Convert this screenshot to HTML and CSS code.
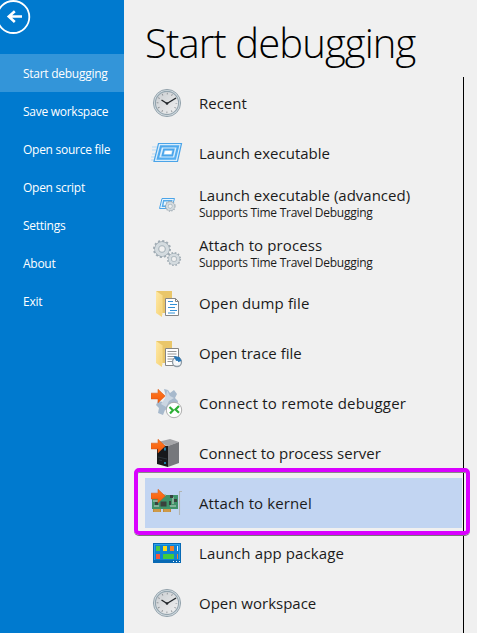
FILE: index.html
```
<!DOCTYPE html>
<html lang="en">
<head>
<meta charset="utf-8">
<title>Start debugging</title>
<link rel="stylesheet" href="styles.css">
</head>
<body>
<svg class="defs" width="0" height="0">
  <defs>
    <linearGradient id="face" x1="0" y1="0" x2="1" y2="1"><stop offset="0" stop-color="#c9cdd1"/><stop offset="1" stop-color="#f1f1f1"/></linearGradient>
    <linearGradient id="folder" x1="0" y1="0" x2="1" y2="1"><stop offset="0" stop-color="#ffe9a6"/><stop offset="1" stop-color="#f5d173"/></linearGradient>
    <linearGradient id="frame" x1="0" y1="0" x2="1" y2="1"><stop offset="0" stop-color="#4da6ea"/><stop offset="1" stop-color="#55b0f3"/></linearGradient>
    <linearGradient id="hot" x1="0" y1="0" x2="0" y2="1"><stop offset="0" stop-color="#ff7b20"/><stop offset="1" stop-color="#f4580c"/></linearGradient>
    <symbol id="arrow" viewBox="0 0 32 32"><path d="M0 6.2h7V2.3l7.2 6.8L7 15.8v-3.9H0z" fill="url(#hot)" stroke="#d95a1b" stroke-width=".6"/></symbol>
    <symbol id="clock" viewBox="0 0 32 32">
      <circle cx="16" cy="16" r="13.6" fill="#d3dce1" stroke="#8d9da7" stroke-width=".9"/>
      <circle cx="16" cy="16" r="11.6" fill="url(#face)" stroke="#93a4ae" stroke-width="1.1"/>
      <circle cx="16" cy="16" r="9.4" fill="none" stroke="#8a8e92" stroke-width="1.8" stroke-dasharray=".9 4.02" stroke-dashoffset=".45"/>
      <path d="M10.5 13l5.5 3.5 9-5.5" fill="none" stroke="#22272b" stroke-width="1.4"/>
      <circle cx="16" cy="16.5" r="1.3" fill="#22272b"/>
    </symbol>
    <symbol id="window" viewBox="0 0 32 32">
      <path d="M1 10h5M1 13h4M1 17h3M0 20h4M0 23h3" stroke="#b5d9f5" stroke-width="1"/>
      <path d="M7.5 6.5h23L26.5 24.5H3z" fill="#d8edfc" stroke="#4ba4e8" stroke-width="1.2"/>
      <path d="M10 9.3h17L24 21.7H6.800z" fill="#d8edfc" stroke="url(#frame)" stroke-width="2.2"/>
      <path d="M13 12.500h9.700l-1.400 6H11.400z" fill="#d5ecfc" stroke="#4ba5ea" stroke-width="1.800"/>
      <path d="M14.500 14h6l-.7 3h-6z" fill="#fff"/>
    </symbol>
    <symbol id="gear" viewBox="-10 -10 20 20">
      <circle r="8.3" fill="none" stroke="#a1acb4" stroke-width="2.4" stroke-dasharray="2.17 2.17"/>
      <circle r="5.6" fill="none" stroke="#98a5ae" stroke-width="5"/>
      <circle r="5.6" fill="none" stroke="#d4dbdf" stroke-width="3.8"/>
      <circle r="3.4" fill="#f0f0f0" stroke="#9ba9b1" stroke-width=".7"/>
    </symbol>
    <symbol id="open-folder" viewBox="0 0 32 32">
      <path d="M5 4h16v22H10z" fill="#e9c66a"/><path d="M5 4l6 4v22l-6-4z" fill="url(#folder)"/><path d="M11 8v20" stroke="#f7dc8f"/>
    </symbol>
  </defs>
</svg>
<div class="app">
  <aside class="sidebar">
    <button class="back" aria-label="Back">
      <svg width="31" height="36" viewBox="0 0 31 36"><circle cx="13.3" cy="17" r="16" fill="none" stroke="#fff" stroke-width="1.8"/><path d="M22 16.500H8.500M14.800 11.300L8.800 16.500l6 5.500" fill="none" stroke="#fff" stroke-width="2.600"/></svg>
    </button>
    <nav class="menu">
      <a class="menu-item active">Start debugging</a>
      <a class="menu-item">Save workspace</a>
      <a class="menu-item">Open source file</a>
      <a class="menu-item">Open script</a>
      <a class="menu-item">Settings</a>
      <a class="menu-item">About</a>
      <a class="menu-item">Exit</a>
    </nav>
  </aside>
  <main class="main">
    <h1 class="title">Start debugging</h1>
    <div class="list">
      <div class="row"><svg class="icon" viewBox="0 0 32 32"><use href="#clock"/></svg><div class="label">Recent</div></div>
      <div class="row"><svg class="icon" viewBox="0 0 32 32"><use href="#window"/></svg><div class="label">Launch executable</div></div>
      <div class="row"><svg class="icon" viewBox="0 0 32 32"><path d="M11 11.500h12.500L20.500 21.500H8.500z" fill="#e5f3fd" stroke="#4ba4e8"/><path d="M12.700 13.700h8l-1.200 5.600h-8z" fill="#e9f5fd" stroke="#56abea" stroke-width="1.400"/><use href="#gear" x="13.500" y="13.500" width="11.500" height="11.500"/></svg><div class="label">Launch executable (advanced)<small>Supports Time Travel Debugging</small></div></div>
      <div class="row"><svg class="icon" viewBox="0 0 32 32"><use href="#gear" x="1.500" y="2.500" width="19" height="19"/><use href="#gear" x="15.500" y="14.500" width="15" height="15"/></svg><div class="label airy">Attach to process<small>Supports Time Travel Debugging</small></div></div>
      <div class="row"><svg class="icon" viewBox="0 0 32 32"><use href="#open-folder"/><path d="M14.500 11.500h10l3 3V28.500h-13z" fill="#fff" stroke="#858585"/><path d="M24.500 11.500v3h3" fill="none" stroke="#858585"/><path d="M17 14.500h5M19 17.500h7M17 20.500h7M19 23.500h7M17 26h7" stroke="#3491d6" stroke-width="1.100"/></svg><div class="label airy">Open dump file</div></div>
      <div class="row"><svg class="icon" viewBox="0 0 32 32"><use href="#open-folder"/><path d="M14.500 11.500h13v17h-13z" fill="#fff" stroke="#858585"/><path d="M16.500 14.500h9M16.500 17h9M16.500 19.500h9M16.500 22h8M16.500 24.500h7" stroke="#969696"/><circle cx="26" cy="25" r="4.500" fill="#f4f6f8" stroke="#8e9aa4" stroke-width="1.300"/><path d="M26 25.500l-3.500-6.500 6 1 2 4z" fill="#2878b8"/><circle cx="26" cy="25" r="1.200" fill="#fff"/></svg><div class="label">Open trace file</div></div>
      <div class="row"><svg class="icon" viewBox="0 0 32 32"><path d="M13 2l4 1 2 3 4-3 3 4-2 4 3 3-1 6-7 5-2-3-3 1-2 5-5-2 1-5-3-3 2-4 5 1 3-5z" fill="#a7b9cc"/><path d="M16 3l3 6 4 2-5 3-3 6-5-3 5-7z" fill="#cbd6e2"/><use href="#arrow"/><circle cx="23" cy="23" r="7.700" fill="#fff" stroke="#9a9a9a" stroke-width=".8"/><path d="M18.500 20l3.500 3.200-3 3.300M28 19l-3.500 3.500 3.500 3.200" fill="none" stroke="#2daf35" stroke-width="2.200"/></svg><div class="label wide">Connect to remote debugger</div></div>
      <div class="row"><svg class="icon" viewBox="0 0 32 32"><path d="M7 5l12-3 9 3-11 4z" fill="#a5a6a9"/><path d="M6 8l11 1v21l-11-3z" fill="#17191c"/><path d="M17 9l11-4v21l-11 4z" fill="#76787c"/><path d="M7 20l9 2M8 23l3 .7" stroke="#343f48" stroke-width=".7"/><path d="M14 10.500v3M14 25v2" stroke="#28a9e1" stroke-width="1.400"/><use href="#arrow"/></svg><div class="label">Connect to process server</div></div>
      <div class="row selected"><svg class="icon" viewBox="0 0 32 32"><path d="M1 8h26v14H1z" fill="#3f9269"/><path d="M2 10l7 1M2 14h6M11 8h4M22 10v7M3 19h5M19 19h6" stroke="#99bca8" stroke-width="1.500"/><path d="M2 22h8v3H2zM12 22h8v3h-8z" fill="#c28a3b"/><path d="M4 22v3M6 22v3M8 22v3M14 22v3M16 22v3M18 22v3" stroke="#e9c06b" stroke-width=".6"/><path d="M9.500 14.500h6v5h-6zM19 8h3v3h-3zM23 12h3v3h-3zM4 15h3v3H4zM18 14h2v4h-2z" fill="#39413d"/><path d="M31 4.500h-2.500V28" fill="none" stroke="#b2b4b1" stroke-width="1.100"/><use href="#arrow"/></svg><div class="label airy">Attach to kernel</div></div>
      <div class="row"><svg class="icon" viewBox="0 0 32 32"><path d="M2 6h28v20H2z" fill="#0869b4"/><path d="M3 7h26v16H3z" fill="#28a0ec"/><path d="M4 8h24v15H4z" fill="#0f83d5"/><path d="M5 9h4v5H5z" fill="#4bc844"/><path d="M12 9h4v5h-4z" fill="#ffdc16"/><path d="M19 9h4v5h-4z" fill="#f28129"/><path d="M5 17h4v5H5z" fill="#f5563d"/><path d="M12 17h11v5H12z" fill="#42cb3d"/><path d="M26 9h1v5h-1z" fill="#e4f3ff"/><path d="M26 17h1v5h-1z" fill="#f28129"/><path d="M22 24.500h1M25 24.500h1M28 24.500h1" stroke="#fff"/></svg><div class="label airy">Launch app package</div></div>
      <div class="row"><svg class="icon" viewBox="0 0 32 32"><use href="#clock"/></svg><div class="label">Open workspace</div></div>
    </div>
  </main>
</div>
</body>
</html>
```
FILE: styles.css
```
*, *::after { box-sizing: border-box; }
body { margin: 0; background: #f0f0f0; font-family: "Open Sans", "Noto Sans", sans-serif; overflow: hidden; }
.defs { position: absolute; }
.app { display: flex; width: 477px; height: 633px; }
.sidebar { width: 124px; flex: none; background: #007acf; }
.back { display: block; height: 54px; padding: 0; border: 0; background: none; }
.back svg { display: block; height: 36px; margin-bottom: 18px; }
.menu-item { display: flex; align-items: center; height: 38px; padding-left: 23px; color: #fff; font-size: 12px; white-space: nowrap; letter-spacing: -0.27px; }
.menu-item.active { background: #3395d9; }
.main { flex: 1; padding-left: 21px; min-width: 0; }
.title { margin: 0; height: 77px; line-height: 86px; font-size: 40px; font-weight: 300; letter-spacing: -0.9px; color: #000; white-space: nowrap; }
.list { width: 319px; height: 556px; padding-top: 1px; border-right: 1px solid #000; }
.row { display: flex; align-items: center; width: 317px; height: 50px; padding-left: 6px; gap: 16px; color: #1b1b1b; }
.icon { width: 32px; height: 32px; flex: none; }
.label { font-size: 15px; line-height: 20px; white-space: nowrap; }
.label.airy { letter-spacing: 0.12px; }
.label.wide { letter-spacing: 0.2px; }
.label small { display: block; font-size: 12px; line-height: 16px; letter-spacing: -0.27px; }
.selected { position: relative; background: #c2d5f2; }
.selected::after { content: ""; position: absolute; left: -11px; top: -10px; width: 336px; height: 67px; border: 4px solid #d900ff; border-radius: 5px; box-shadow: inset 0 1px 0 #888, 0 1px 0 #777; }
```
